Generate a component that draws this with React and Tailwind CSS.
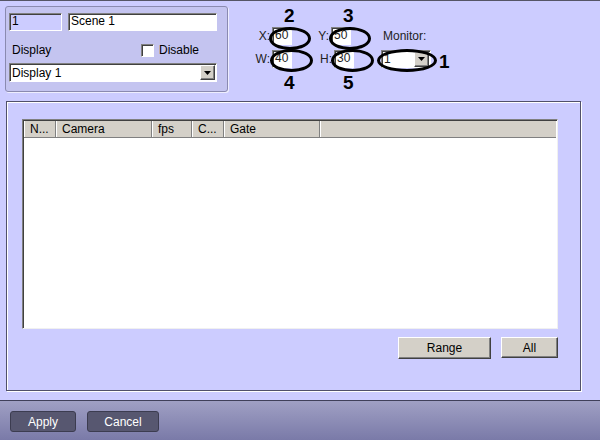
import React from 'react';

const sunken = 'border border-t-[#808080] border-l-[#808080] border-b-white border-r-white shadow-[inset_1px_1px_0_#404040]';
const raised = 'border border-t-white border-l-white border-b-[#404040] border-r-[#404040] shadow-[inset_-1px_-1px_0_#808080]';

const DropArrow = () => (
  <div className={`w-[15px] h-[15px] bg-[#d4d0c8] ${raised} flex items-center justify-center`}>
    <svg width="7" height="4" viewBox="0 0 7 4"><path d="M0 0h7L3.5 4z" fill="#000" /></svg>
  </div>
);

const Field = ({ value, w, bg = 'bg-white' }) => (
  <div className={`${bg} ${sunken} h-[18px] leading-[15px] pl-[2px] overflow-hidden`} style={{ width: w }}>
    {value}
  </div>
);

const Ellipse = ({ x, y, w, h }) => (
  <div
    className="absolute rounded-[50%] border-[3px] border-black"
    style={{ left: x, top: y, width: w, height: h }}
  />
);

const Num = ({ x, y, n }) => (
  <div className="absolute text-[19px] font-bold leading-none" style={{ left: x, top: y }}>{n}</div>
);

const cols = [
  { label: 'N...', w: 32 },
  { label: 'Camera', w: 96 },
  { label: 'fps', w: 40 },
  { label: 'C...', w: 32 },
  { label: 'Gate', w: 96 },
];

export default function App() {
  return (
    <div className="w-[600px] h-[440px] bg-[#ccccff] flex flex-col font-['Liberation_Sans',Arial,sans-serif] text-[12px] text-black border-t border-[#555566] overflow-hidden">
      {/* top section */}
      <div className="relative h-[100px] flex items-start">
        <div className="ml-[5px] mt-[5px] w-[223px] h-[86px] rounded-[3px] border border-[#8a8ab0] bg-[#c4c4f0] shadow-[1px_1px_0_#eeeeff] px-[3px] pt-[6px] flex flex-col">
          <div className="flex gap-[6px]">
            <Field value="1" w={53} bg="bg-[#ccccff]" />
            <Field value="Scene 1" w={149} />
          </div>
          <div className="flex items-center mt-[12px] h-[14px]">
            <span className="ml-[3px] w-[129px]">Display</span>
            <div className={`w-[13px] h-[13px] bg-white ${sunken}`} />
            <span className="ml-[5px]">Disable</span>
          </div>
          <div className={`mt-[6px] w-[208px] h-[19px] bg-white ${sunken} flex items-center justify-between pl-[2px] pr-[1px]`}>
            <span>Display 1</span>
            <DropArrow />
          </div>
        </div>

        <div className="ml-[27px] mt-[26px] flex flex-col gap-[5px] text-[#222]">
          <div className="flex items-center">
            <span className="w-[17px] text-right pr-[2px]">X:</span>
            <Field value="60" w={20} />
            <span className="ml-[24px] w-[15px] pr-[2px] text-right">Y:</span>
            <Field value="50" w={20} />
            <span className="ml-[32px]">Monitor:</span>
          </div>
          <div className="flex items-center">
            <span className="w-[17px] text-right pr-[2px]">W:</span>
            <Field value="40" w={20} />
            <span className="ml-[27px] w-[15px] pr-[2px] text-right">H:</span>
            <Field value="30" w={20} />
            <div className={`ml-[27px] w-[50px] h-[18px] bg-white ${sunken} flex items-center justify-between pl-[2px] pr-[1px]`}>
              <span>1</span>
              <DropArrow />
            </div>
          </div>
        </div>

        <Ellipse x={269} y={26} w={42} h={23} />
        <Ellipse x={329} y={26} w={42} h={23} />
        <Ellipse x={270} y={48} w={43} h={23} />
        <Ellipse x={331} y={48} w={43} h={23} />
        <Ellipse x={377} y={48} w={60} h={23} />
        <Num x={284} y={5} n="2" />
        <Num x={343} y={5} n="3" />
        <Num x={284} y={72} n="4" />
        <Num x={343} y={72} n="5" />
        <Num x={439} y={51} n="1" />
      </div>

      {/* group box */}
      <div className="ml-[6px] w-[575px] h-[290px] border border-[#50506a] shadow-[1px_1px_0_#ffffff,inset_1px_1px_0_#ffffff] pl-[15px] pr-[22px] pt-[17px] flex flex-col">
        <div className="w-[536px] h-[210px] bg-white border border-t-[#808080] border-l-[#808080] border-b-[#f0f0f0] border-r-[#f0f0f0] shadow-[inset_1px_1px_0_#404040] flex flex-col p-[1px]">
          <div className="flex h-[17px] bg-[#d4d0c8] border-b border-[#808080]">
            {cols.map((c) => (
              <div key={c.label} className="border-r border-[#808080] shadow-[inset_1px_0_0_#ffffff] pl-[6px] leading-[16px]" style={{ width: c.w }}>
                {c.label}
              </div>
            ))}
            <div className="flex-1 shadow-[inset_1px_0_0_#ffffff]" />
          </div>
        </div>
        <div className="flex justify-end gap-[10px] mt-[8px]">
          <button className={`w-[93px] h-[22px] bg-[#d4d0c8] ${raised} leading-[18px]`}>Range</button>
          <button className={`w-[57px] h-[21px] bg-[#d4d0c8] ${raised} leading-[18px]`}>All</button>
        </div>
      </div>

      {/* bottom bar */}
      <div className="mt-[9px] flex-1 border-t border-[#40405a] bg-gradient-to-b from-[#a0a0c4] to-[#7a7aa8] flex items-start gap-[11px] pl-[10px] pt-[10px]">
        <button className="w-[66px] h-[21px] rounded-[3px] bg-[#575770] border border-[#3c3c50] text-white leading-[18px]">Apply</button>
        <button className="w-[72px] h-[21px] rounded-[3px] bg-[#575770] border border-[#3c3c50] text-white leading-[18px]">Cancel</button>
      </div>
    </div>
  );
}
